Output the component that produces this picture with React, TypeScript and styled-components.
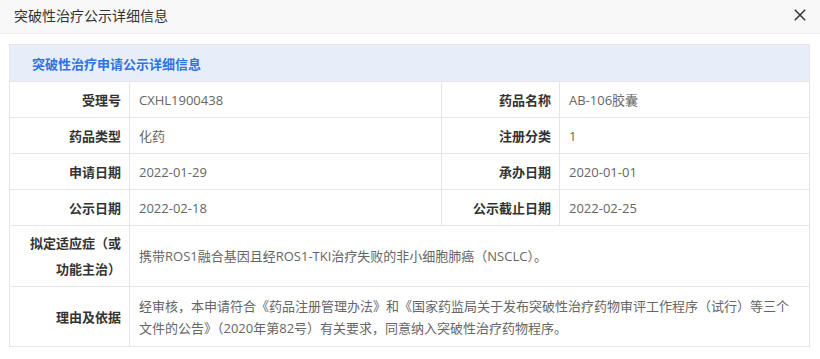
import React from "react";
import styled, { createGlobalStyle } from "styled-components";

const GlobalStyle = createGlobalStyle`
  html, body {
    margin: 0;
    padding: 0;
    background: #fff;
  }
  body {
    font-family: "Open Sans", "Noto Sans CJK SC", "Noto Sans", sans-serif;
    font-size: 13px;
    color: #333;
  }
`;

const Dialog = styled.div`
  width: 820px;
  height: 359px;
  background: #fff;
`;

const TitleBar = styled.div`
  height: 34px;
  display: flex;
  align-items: center;
  justify-content: space-between;
  padding: 0 14px;
  background: #f8f8f8;
  border-bottom: 1px solid #eee;
  box-sizing: border-box;
`;

const TitleText = styled.span`
  font-family: "Noto Sans CJK SC", sans-serif;
  font-size: 14px;
  color: #333;
  margin-top: -4px;
`;

const CloseBtn = styled.button`
  all: unset;
  width: 12px;
  height: 12px;
  display: flex;
  margin-top: -4px;
  cursor: pointer;
`;

const Body = styled.div`
  padding: 10px 11px 0 9px;
`;

const Table = styled.table`
  width: 800px;
  table-layout: fixed;
  border-collapse: collapse;
  border: 1px solid #e6e6e6;
`;

const Caption = styled.th`
  height: 36px;
  padding: 0 0 0 22px;
  background: #e8eef9;
  color: #2c75e0;
  font-size: 13px;
  font-weight: bold;
  text-align: left;
  border-bottom: 1px solid #e6e6e6;
`;

const Row = styled.tr<{ $h?: number }>`
  height: ${(p) => p.$h ?? 36}px;
`;

const Label = styled.td<{ $lh?: number }>`
  padding: 0 8px 0 9px;
  text-align: right;
  font-weight: bold;
  color: #333;
  line-height: ${(p) => p.$lh ?? 20}px;
  border: 1px solid #e6e6e6;
  background: #fff;
`;

const Value = styled.td`
  padding: 0 9px;
  color: #666;
  line-height: 22px;
  border: 1px solid #e6e6e6;
`;

const CloseIcon = () => (
  <svg width="12" height="12" viewBox="0 0 12 12">
    <path d="M0.8 0.8 L11.2 11.2 M11.2 0.8 L0.8 11.2" stroke="#333" strokeWidth="1.5" />
  </svg>
);

const pairs: [string, string, string, string][] = [
  ["受理号", "CXHL1900438", "药品名称", "AB-106胶囊"],
  ["药品类型", "化药", "注册分类", "1"],
  ["申请日期", "2022-01-29", "承办日期", "2020-01-01"],
  ["公示日期", "2022-02-18", "公示截止日期", "2022-02-25"],
];

export default function App() {
  return (
    <>
      <GlobalStyle />
      <Dialog>
        <TitleBar>
          <TitleText>突破性治疗公示详细信息</TitleText>
          <CloseBtn>
            <CloseIcon />
          </CloseBtn>
        </TitleBar>
        <Body>
          <Table>
            <colgroup>
              <col style={{ width: 120 }} />
              <col style={{ width: 312 }} />
              <col style={{ width: 118 }} />
              <col style={{ width: 250 }} />
            </colgroup>
            <thead>
              <tr>
                <Caption colSpan={4}>突破性治疗申请公示详细信息</Caption>
              </tr>
            </thead>
            <tbody>
              {pairs.map(([l1, v1, l2, v2]) => (
                <Row key={l1}>
                  <Label>{l1}</Label>
                  <Value>{v1}</Value>
                  <Label>{l2}</Label>
                  <Value>{v2}</Value>
                </Row>
              ))}
              <Row $h={61}>
                <Label $lh={26}>拟定适应症（或功能主治）</Label>
                <Value colSpan={3}>
                  携带ROS1融合基因且经ROS1-TKI治疗失败的非小细胞肺癌（NSCLC）。
                </Value>
              </Row>
              <Row $h={60}>
                <Label>理由及依据</Label>
                <Value colSpan={3}>
                  经审核，本申请符合《药品注册管理办法》和《国家药监局关于发布突破性治疗药物审评工作程序（试行）等三个文件的公告》（2020年第82号）有关要求，同意纳入突破性治疗药物程序。
                </Value>
              </Row>
            </tbody>
          </Table>
        </Body>
      </Dialog>
    </>
  );
}
